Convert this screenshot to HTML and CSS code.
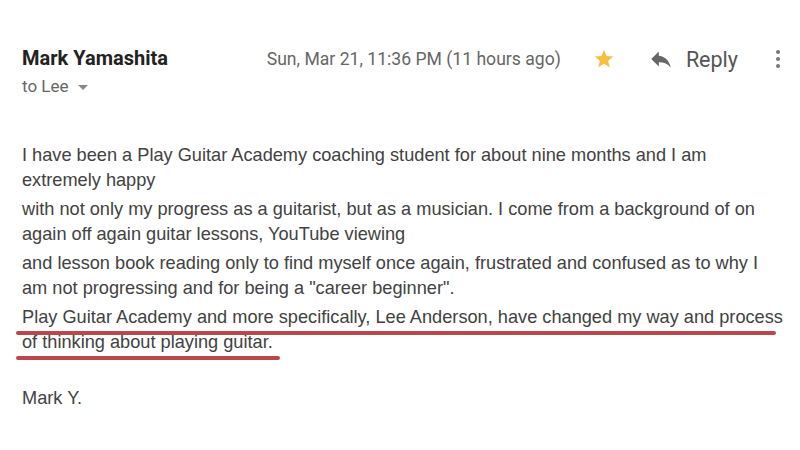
FILE: index.html
```html
<!DOCTYPE html>
<html>
<head>
<meta charset="utf-8">
<link rel="stylesheet" href="styles.css">
</head>
<body>
<div class="mail">
  <div class="header">
    <div class="sender">
      <div class="name">Mark Yamashita</div>
      <div class="to">to Lee <span class="caret"></span></div>
    </div>
    <div class="meta">
      <span class="date">Sun, Mar 21, 11:36 PM (11 hours ago)</span>
      <svg class="star" width="22" height="22" viewBox="0 0 24 24"><path fill="#f6bf3f" d="M12 17.27 18.18 21l-1.64-7.03L22 9.24l-7.19-.61L12 2 9.19 8.63 2 9.24l5.46 4.73L5.82 21z"/></svg>
      <span class="reply">
        <svg class="reply-icon" width="26" height="26" viewBox="0 0 24 24"><path fill="#666" d="M10 9V5l-7 7 7 7v-4.1c5 0 8.5 1.6 11 5.1-1-5-4-10-11-11z"/></svg>
        <span class="reply-text">Reply</span>
      </span>
      <svg class="more" width="6" height="20" viewBox="0 0 6 20"><circle cx="3" cy="3" r="2" fill="#777"/><circle cx="3" cy="10" r="2" fill="#777"/><circle cx="3" cy="17" r="2" fill="#777"/></svg>
    </div>
  </div>
  <div class="body">
    <div class="para">I have been a Play Guitar Academy coaching student for about nine months and I am extremely happy</div>
    <div class="para">with not only my progress as a guitarist, but as a musician. I come from a background of on again off again guitar lessons, YouTube viewing</div>
    <div class="para">and lesson book reading only to find myself once again, frustrated and confused as to why I am not progressing and for being a "career beginner".</div>
    <div class="para marked">Play Guitar Academy and more specifically, Lee Anderson, have changed my way and process of thinking about playing guitar.<span class="mark mark1"></span><span class="mark mark2"></span></div>
    <div class="sign">Mark Y.</div>
  </div>
</div>
</body>
</html>
```

FILE: styles.css
```css
html, body {
  margin: 0;
  padding: 0;
  background: #ffffff;
}

.mail {
  width: 800px;
  height: 450px;
  overflow: hidden;
}

.header {
  display: flex;
  align-items: flex-start;
  padding: 45px 19px 0 22px;
}

.sender {
  display: flex;
  flex-direction: column;
}

.name {
  font-family: Roboto, "Liberation Sans", sans-serif;
  font-weight: 700;
  font-size: 20px;
  line-height: 26px;
  color: #222222;
}

.to {
  font-family: Roboto, "Liberation Sans", sans-serif;
  font-size: 17px;
  line-height: 22px;
  color: #666666;
  margin-top: 4px;
  display: flex;
  align-items: center;
}

.caret {
  display: inline-block;
  width: 0;
  height: 0;
  margin-left: 9px;
  margin-top: 2px;
  border-left: 5px solid transparent;
  border-right: 5px solid transparent;
  border-top: 5px solid #888888;
}

.meta {
  margin-left: auto;
  display: flex;
  align-items: center;
  height: 28px;
}

.date {
  font-family: Roboto, "Liberation Sans", sans-serif;
  font-size: 17.6px;
  color: #666666;
  margin-right: 32px;
}

.star {
  margin-right: 33px;
}

.reply {
  display: flex;
  align-items: center;
  margin-right: 37px;
}

.reply-icon {
  margin-right: 12px;
}

.reply-text {
  font-family: Roboto, "Liberation Sans", sans-serif;
  font-size: 21.5px;
  color: #555555;
}

.body {
  position: relative;
  width: 766px;
  padding: 46px 0 0 22px;
  font-family: "Liberation Sans", Arial, sans-serif;
  font-size: 18.2px;
  line-height: 25px;
  color: #424242;
}

.para {
  margin-bottom: 4px;
}

.marked {
  position: relative;
}

.mark {
  position: absolute;
  height: 4px;
  border-radius: 2px;
  background: #b9474c;
}

.mark1 {
  left: -6px;
  width: 760px;
  top: 26px;
}

.mark2 {
  left: -6px;
  width: 264px;
  top: 51px;
}

.sign {
  margin-top: 31px;
}
```
